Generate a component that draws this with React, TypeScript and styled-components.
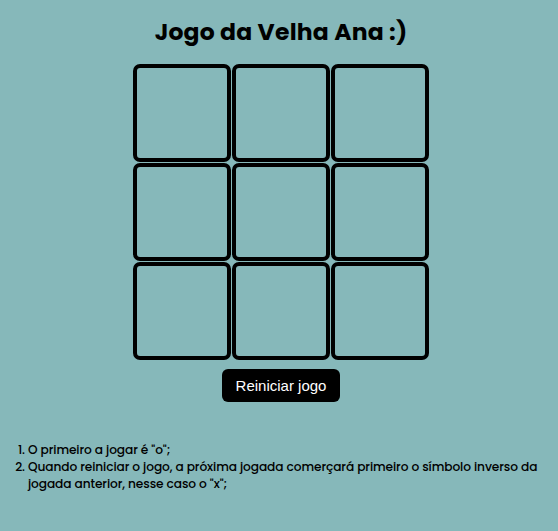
import styled, { createGlobalStyle } from "styled-components"

const GlobalStyle = createGlobalStyle`
    html, body {
        background-color: #86b8ba;
    }
    body {
        margin: 8px 6px 8px 10px;
        font-family: "Poppins", "Inter", "Noto Sans", sans-serif;
        color: #000;
    }
`

const cells = Array.from({ length: 9 }, (_, i) => i)

const App = () => {
    return (
        <>
            <GlobalStyle />
            <Page>
                <Title>Jogo da Velha Ana :)</Title>
                <Board>
                    {cells.map((i) => (
                        <Cell key={i} />
                    ))}
                </Board>
                <ResetButton>Reiniciar jogo</ResetButton>
                <Rules>
                    <li>O primeiro a jogar é "o";</li>
                    <li>
                        Quando reiniciar o jogo, a próxima jogada comerçará primeiro o símbolo inverso da
                        jogada anterior, nesse caso o "x";
                    </li>
                </Rules>
            </Page>
        </>
    )
}

export default App

const Page = styled.div`
    display: flex;
    flex-direction: column;
    align-items: center;
`
const Title = styled.h1`
    font-size: 23.5px;
    font-weight: 700;
    margin: 6px 0 15px;
    letter-spacing: 0.2px;
`
const Board = styled.div`
    display: grid;
    grid-template-columns: repeat(3, 98px);
    grid-template-rows: repeat(3, 98px);
    gap: 1px;
`
const Cell = styled.div`
    box-sizing: border-box;
    border: 4px solid #000;
    border-radius: 7px;
    cursor: pointer;
`
const ResetButton = styled.button`
    margin-top: 9px;
    width: 118px;
    height: 33px;
    background-color: #000;
    color: #fff;
    border: none;
    border-radius: 6px;
    font-family: "Liberation Sans", Arial, sans-serif;
    font-size: 15px;
    cursor: pointer;
`
const Rules = styled.ol`
    align-self: stretch;
    margin: 39px 0 0;
    padding-left: 18px;
    font-size: 12.2px;
    font-weight: 500;
    line-height: 17px;
    letter-spacing: -0.1px;
`
